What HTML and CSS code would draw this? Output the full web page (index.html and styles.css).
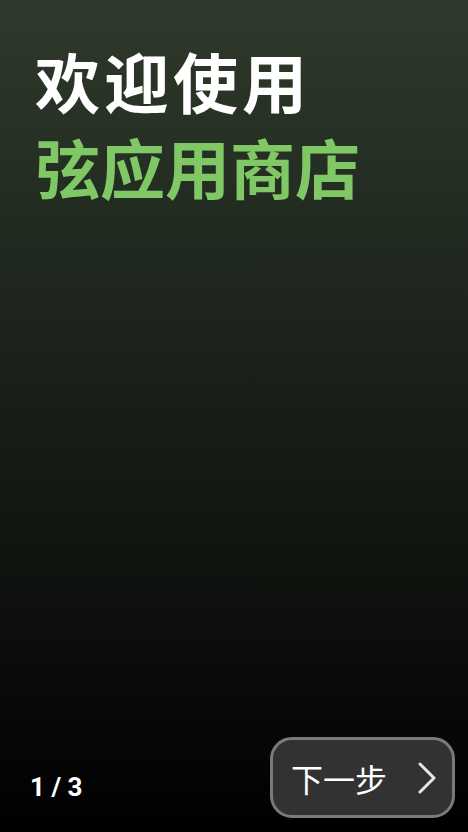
FILE: index.html
```html
<!DOCTYPE html>
<html lang="zh-CN">
<head>
<meta charset="utf-8">
<link rel="stylesheet" href="styles.css">
</head>
<body>
<div class="screen">
  <header class="hero">
    <h1 class="title">欢迎使用</h1>
    <h2 class="subtitle">弦应用商店</h2>
  </header>
  <footer class="footer">
    <span class="counter">1 / 3</span>
    <button class="next">
      <span class="next-label">下一步</span>
      <svg class="chevron" width="20" height="32" viewBox="0 0 20 32"><path d="M3 2 L17 16 L3 30" fill="none" stroke="#ece2e2" stroke-width="3" stroke-linecap="round" stroke-linejoin="round"/></svg>
    </button>
  </footer>
</div>
</body>
</html>
```
FILE: styles.css
```css
html, body {
  margin: 0;
  padding: 0;
  background: #000;
}
.screen {
  width: 468px;
  height: 832px;
  display: flex;
  flex-direction: column;
  justify-content: space-between;
  background: linear-gradient(to bottom, #2e3a2b 0%, #1e261d 35%, #111510 65%, #000 100%);
  font-family: "Noto Sans CJK SC", "Noto Sans", sans-serif;
  box-sizing: border-box;
}
.hero {
  padding: 37px 0 0 35px;
}
.title, .subtitle {
  margin: 0;
  font-size: 65px;
  line-height: 86px;
  font-weight: 700;
}
.title {
  color: #ffffff;
  letter-spacing: 4px;
}
.subtitle { color: #80c766; }
.footer {
  display: flex;
  justify-content: space-between;
  align-items: flex-end;
  padding: 0 13px 14px 30px;
}
.counter {
  font-family: Roboto, "Liberation Sans", sans-serif;
  font-weight: 700;
  font-size: 26px;
  line-height: 30px;
  color: #fff;
  margin-bottom: 16px;
}
.next {
  box-sizing: border-box;
  width: 185px;
  height: 81px;
  border: 3px solid #7a7a7a;
  border-radius: 22px;
  background: #323232;
  display: flex;
  align-items: center;
  justify-content: space-between;
  padding: 0 15px 0 18px;
  font-family: "Noto Sans CJK SC", sans-serif;
  color: #fff;
}
.next-label {
  font-size: 32px;
  line-height: 40px;
  font-weight: 400;
}
.chevron {
  display: block;
}
```
